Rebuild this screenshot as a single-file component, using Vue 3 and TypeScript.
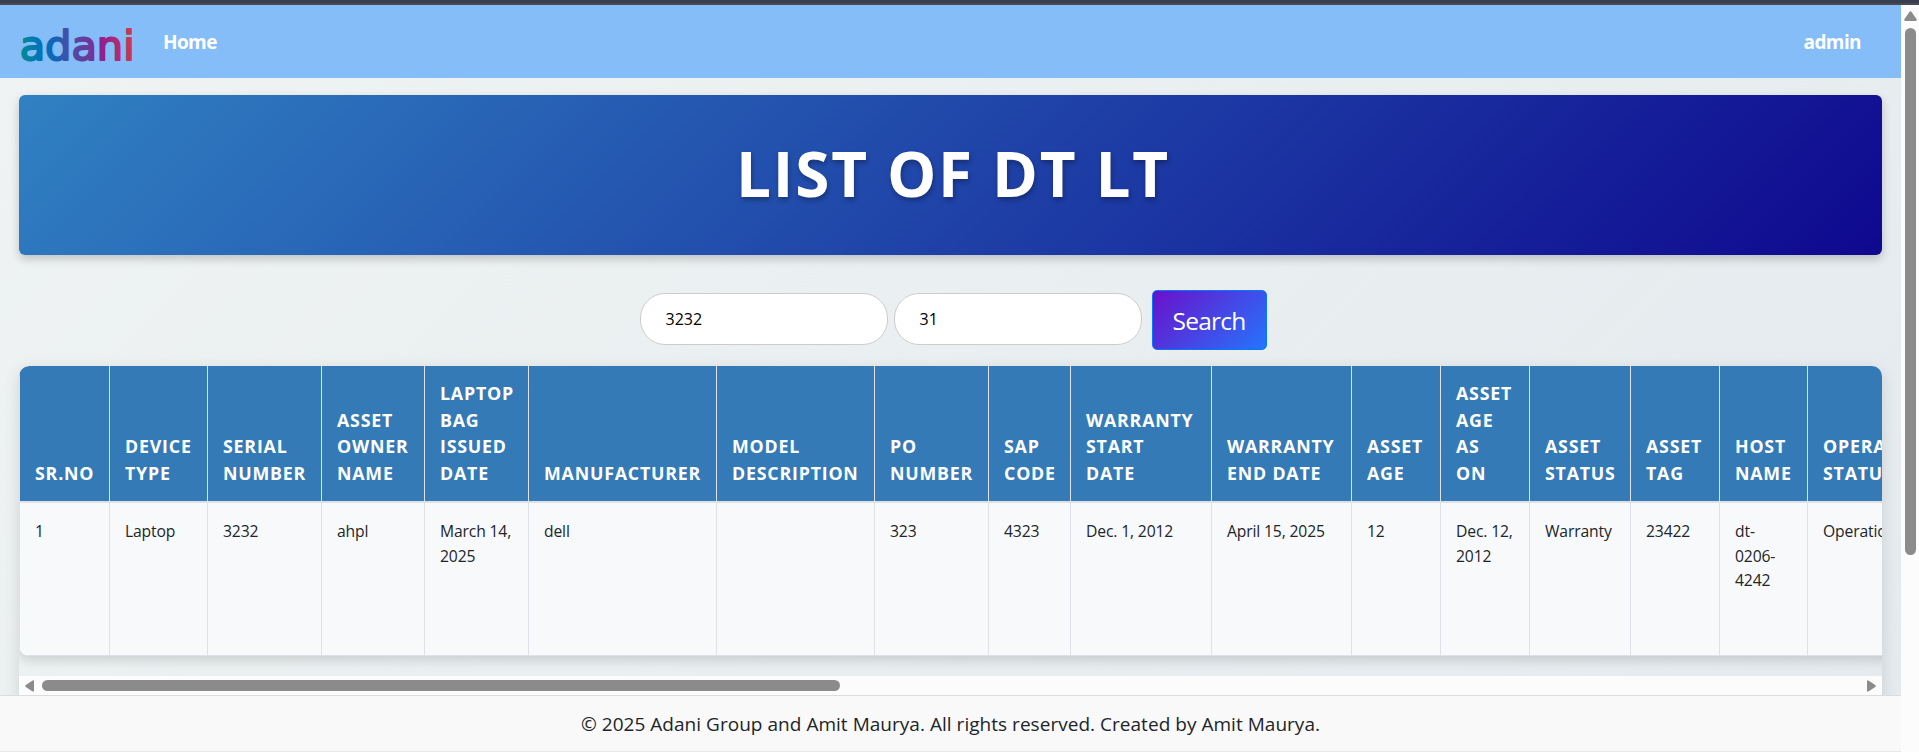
<script setup lang="ts">
interface Column {
  head: string[]
  cell: string[]
  width: number
}

const columns: Column[] = [
  { head: ['Sr.No'], cell: ['1'], width: 90 },
  { head: ['Device', 'Type'], cell: ['Laptop'], width: 98 },
  { head: ['Serial', 'Number'], cell: ['3232'], width: 114 },
  { head: ['Asset', 'Owner', 'Name'], cell: ['ahpl'], width: 103 },
  { head: ['Laptop', 'Bag', 'Issued', 'Date'], cell: ['March 14,', '2025'], width: 104 },
  { head: ['Manufacturer'], cell: ['dell'], width: 188 },
  { head: ['Model', 'Description'], cell: [], width: 158 },
  { head: ['PO', 'Number'], cell: ['323'], width: 114 },
  { head: ['SAP', 'Code'], cell: ['4323'], width: 82 },
  { head: ['Warranty', 'Start', 'Date'], cell: ['Dec. 1, 2012'], width: 141 },
  { head: ['Warranty', 'End Date'], cell: ['April 15, 2025'], width: 140 },
  { head: ['Asset', 'Age'], cell: ['12'], width: 89 },
  { head: ['Asset', 'Age', 'As', 'On'], cell: ['Dec. 12,', '2012'], width: 89 },
  { head: ['Asset', 'Status'], cell: ['Warranty'], width: 101 },
  { head: ['Asset', 'Tag'], cell: ['23422'], width: 89 },
  { head: ['Host', 'Name'], cell: ['dt-', '0206-', '4242'], width: 88 },
  { head: ['Operational', 'Status'], cell: ['Operational'], width: 160 },
]
const tableWidth = columns.reduce((sum, c) => sum + c.width, 0)
</script>

<template>
  <div class="window">
    <div class="strip"></div>
    <div class="viewport">
      <div class="page">
        <nav class="navbar">
          <svg class="logo" width="116" height="44" viewBox="0 0 116 44" role="img" aria-label="adani">
            <defs>
              <linearGradient id="brand" gradientUnits="userSpaceOnUse" x1="2" y1="40" x2="114" y2="32">
                <stop offset="0" stop-color="#008c96" />
                <stop offset="0.17" stop-color="#0074b8" />
                <stop offset="0.3" stop-color="#0e66b6" />
                <stop offset="0.44" stop-color="#4a4da6" />
                <stop offset="0.62" stop-color="#6f379b" />
                <stop offset="0.74" stop-color="#951f8e" />
                <stop offset="0.88" stop-color="#b02c70" />
                <stop offset="1" stop-color="#cc3a4e" />
              </linearGradient>
            </defs>
            <text class="logo-text" x="0.7" y="38" textLength="115" lengthAdjust="spacingAndGlyphs">adani</text>
          </svg>
          <a class="nav-link">Home</a>
          <a class="nav-link user">admin</a>
        </nav>

        <main class="content">
          <header class="banner"><h1>List of DT LT</h1></header>

          <form class="search" @submit.prevent>
            <input type="text" value="3232" />
            <input type="text" value="31" />
            <button type="submit">Search</button>
          </form>

          <section class="table-box">
            <div class="table-clip">
              <table :style="{ width: tableWidth + 'px' }">
                <colgroup><col v-for="(c, i) in columns" :key="i" :style="{ width: c.width + 'px' }" /></colgroup>
                <thead>
                  <tr>
                    <th v-for="(c, i) in columns" :key="i"><div v-for="line in c.head" :key="line">{{ line }}</div></th>
                  </tr>
                </thead>
                <tbody>
                  <tr>
                    <td v-for="(c, i) in columns" :key="i"><div v-for="line in c.cell" :key="line">{{ line }}</div></td>
                  </tr>
                </tbody>
              </table>
            </div>
            <div class="hscroll">
              <svg width="9" height="12" viewBox="0 0 9 12"><path d="M7.6 0.4Q9 0 9 1.4V10.6Q9 12 7.6 11.6L0.8 7Q-0.3 6 0.8 5Z" /></svg>
              <div class="htrack"><div class="hthumb"></div></div>
              <svg width="9" height="12" viewBox="0 0 9 12"><path d="M1.4 0.4Q0 0 0 1.4V10.6Q0 12 1.4 11.6L8.2 7Q9.3 6 8.2 5Z" /></svg>
            </div>
          </section>
        </main>

        <footer class="footer">© 2025 Adani Group and Amit Maurya. All rights reserved. Created by Amit Maurya.</footer>
      </div>

      <div class="vscroll">
        <svg width="13" height="10" viewBox="0 0 13 10"><path d="M0.5 8Q-0.4 10 1.5 10H11.5Q13.4 10 12.5 8L7.6 0.9Q6.5 -0.5 5.4 0.9Z" /></svg>
        <div class="vthumb"></div>
      </div>
    </div>
  </div>
</template>

<style>
body {
  margin: 0;
  overflow: hidden;
}
</style>

<style scoped>
* {
  box-sizing: border-box;
}
.window {
  width: 1919px;
  height: 752px;
  display: flex;
  flex-direction: column;
  overflow: hidden;
  font-family: "Open Sans", "Noto Sans", sans-serif;
  color: #212529;
}
.strip {
  flex: none;
  height: 5px;
  background: #373e4f;
  border-bottom: 2px solid #484a50;
}
.viewport {
  flex: 1;
  min-height: 0;
  display: flex;
}
.page {
  flex: 1;
  min-width: 0;
  display: flex;
  flex-direction: column;
  background: linear-gradient(135deg, #eff3f3, #e4eaee);
}
.navbar {
  flex: none;
  height: 73px;
  display: flex;
  align-items: flex-start;
  padding: 0 40px 0 19px;
  background: #84bdf7;
}
.logo {
  margin-top: 17px;
  overflow: visible;
}
.logo-text {
  font: 41.5px "DejaVu Sans", sans-serif;
  fill: url(#brand);
  stroke: url(#brand);
  stroke-width: 2px;
  stroke-linejoin: round;
}
.nav-link {
  margin: 24px 0 0 28px;
  font-size: 19px;
  line-height: 26px;
  font-weight: 700;
  letter-spacing: -0.6px;
  color: #fff;
}
.user {
  margin-left: auto;
}
.content {
  flex: 1;
  min-height: 0;
  overflow: hidden;
  padding: 17px 19px 0;
}
.banner {
  height: 160px;
  display: flex;
  align-items: center;
  justify-content: center;
  padding: 0 0 4px 5px;
  border-radius: 6px;
  background: linear-gradient(135deg, #3081c2, #0f088f);
  box-shadow: 0 4px 10px rgba(0, 0, 0, 0.2);
}
h1 {
  margin: 0;
  font-size: 62px;
  line-height: 80px;
  font-weight: 700;
  letter-spacing: 1.85px;
  text-transform: uppercase;
  color: #fff;
  text-shadow: 1px 3px 5px rgba(0, 0, 0, 0.3);
}
.search {
  display: flex;
  align-items: flex-start;
  justify-content: center;
  padding: 35px 0 16px 5px;
}
input {
  width: 248px;
  height: 52px;
  margin: 3px 6px 0 0;
  padding: 0 25px;
  border: 1px solid #ccc;
  border-radius: 25px;
  background: #fff;
  font: 16px "Open Sans", "Noto Sans", sans-serif;
  color: #000;
}
button {
  width: 115px;
  height: 60px;
  margin-left: 4px;
  padding: 1px 0 0;
  border: 1px solid #007bff;
  border-radius: 5px;
  background: linear-gradient(135deg, #6a11cb, #2575fc);
  font: 24.5px "Open Sans", "Noto Sans", sans-serif;
  letter-spacing: -0.75px;
  color: #fff;
}
.table-box {
  height: 420px;
  border-radius: 10px;
  box-shadow: 0 4px 16px rgba(0, 0, 0, 0.12);
}
.table-clip {
  height: 310px;
  overflow: hidden;
  border-radius: 10px 10px 0 0;
}
table {
  table-layout: fixed;
  border-collapse: separate;
  border-spacing: 0;
  border-radius: 10px;
  overflow: hidden;
  background: #f8f9fb;
  box-shadow: 0 4px 12px rgba(0, 0, 0, 0.15);
}
th,
td {
  padding: 16px 0 0 15px;
  border-left: 1px solid #dee2e6;
  text-align: left;
  white-space: nowrap;
}
th {
  height: 137px;
  padding-top: 0;
  padding-bottom: 15px;
  vertical-align: bottom;
  border-bottom: 2px solid #dee2e6;
  background: #347ab7;
  font-size: 17.8px;
  line-height: 26.4px;
  font-weight: 700;
  letter-spacing: 0.8px;
  text-transform: uppercase;
  color: #fff;
}
td {
  height: 153px;
  vertical-align: top;
  border-bottom: 1px solid #dee2e6;
  font-size: 15.7px;
  line-height: 24.5px;
  letter-spacing: -0.15px;
}
.hscroll {
  height: 19px;
  display: flex;
  align-items: center;
  padding: 0 6px;
  background: #fcfcfc;
}
.hscroll svg,
.vscroll svg {
  flex: none;
  fill: #8b8b8b;
}
.htrack {
  flex: 1;
  padding-left: 8px;
}
.hthumb {
  width: 798px;
  height: 11px;
  border-radius: 6px;
  background: #8b8b8b;
}
.footer {
  flex: none;
  height: 57px;
  padding-top: 14px;
  border-top: 1px solid #dadde0;
  border-bottom: 1px solid #e8e8e8;
  background: #f9f9f9;
  text-align: center;
  font-size: 19px;
  line-height: 28px;
  letter-spacing: 0.03px;
}
.vscroll {
  flex: none;
  width: 18px;
  display: flex;
  flex-direction: column;
  align-items: center;
  padding-top: 6px;
  background: #fcfcfc;
}
.vthumb {
  width: 11px;
  height: 527px;
  margin-top: 7px;
  border-radius: 6px;
  background: #8b8b8b;
}
</style>
